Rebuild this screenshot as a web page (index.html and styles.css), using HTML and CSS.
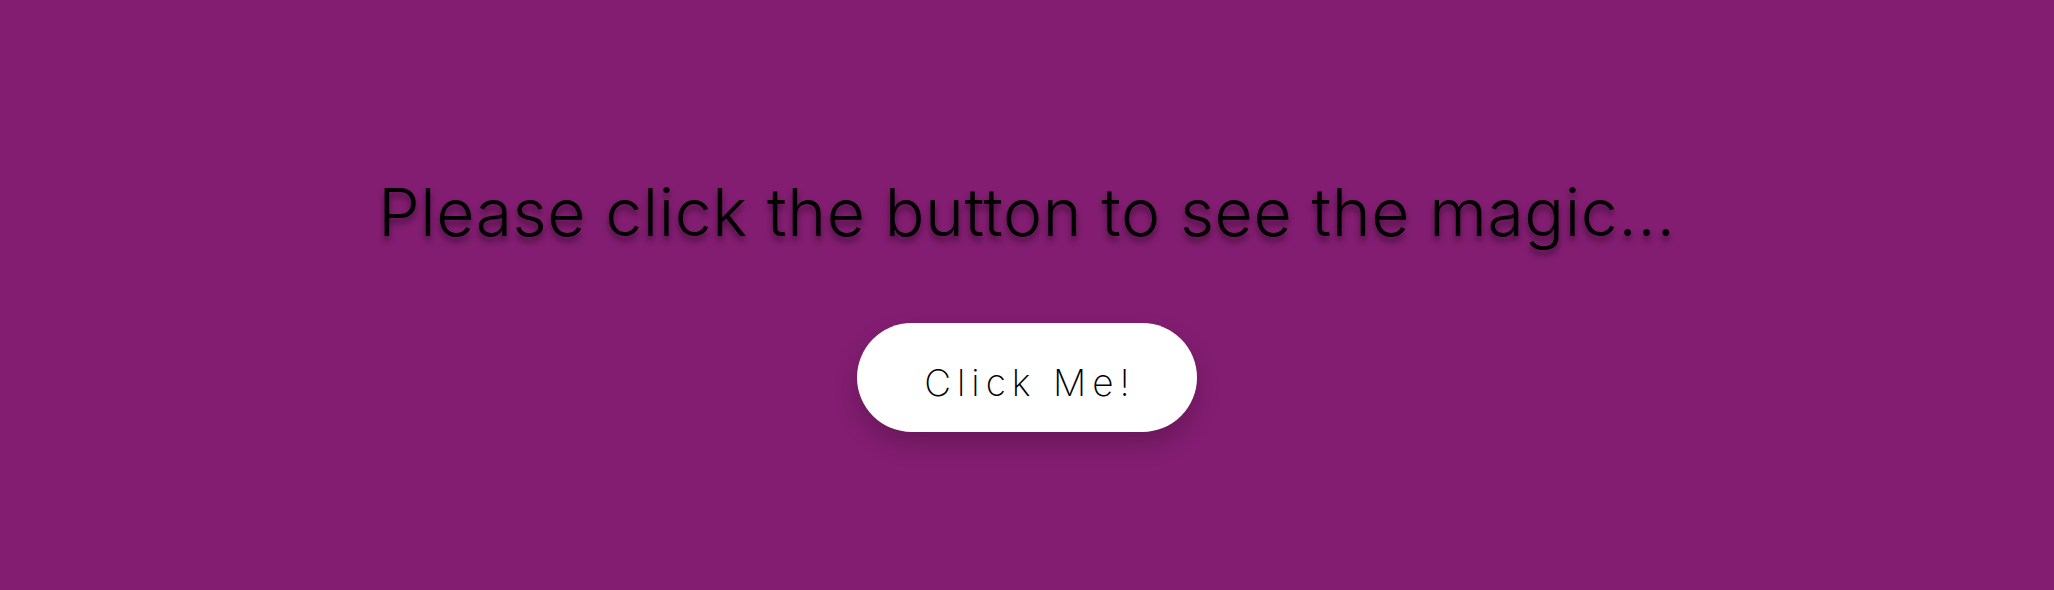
FILE: index.html
```html
<!DOCTYPE html>
<html lang="en">
<head>
<meta charset="utf-8">
<title>Magic</title>
<link rel="stylesheet" href="styles.css">
</head>
<body>
<main class="stage">
  <h1 class="title">Please click the button to see the magic...</h1>
  <button class="magic-btn" type="button">Click Me!</button>
</main>
</body>
</html>
```

FILE: styles.css
```css
html, body {
  margin: 0;
  padding: 0;
}
body {
  background: #831d71;
  font-family: "Inter", "Lato", "DejaVu Sans", sans-serif;
}
.stage {
  box-sizing: border-box;
  height: 100vh;
  padding-top: 21px;
  display: flex;
  flex-direction: column;
  align-items: center;
  justify-content: center;
  gap: 78px;
}
.title {
  margin: 0;
  font-size: 66px;
  font-weight: 300;
  letter-spacing: 0.6px;
  line-height: 1;
  color: #000;
  text-shadow: 0 5px 6px rgba(0, 0, 0, 0.45);
}
.magic-btn {
  width: 340px;
  height: 109px;
  padding: 10px 0 0 6px;
  border: none;
  border-radius: 55px;
  background: #fff;
  color: #000;
  font-family: "Inter", "Lato", "DejaVu Sans", sans-serif;
  font-size: 37px;
  font-weight: 200;
  letter-spacing: 6px;
  box-shadow: 0 12px 24px rgba(0, 0, 0, 0.2);
  cursor: pointer;
}
```
